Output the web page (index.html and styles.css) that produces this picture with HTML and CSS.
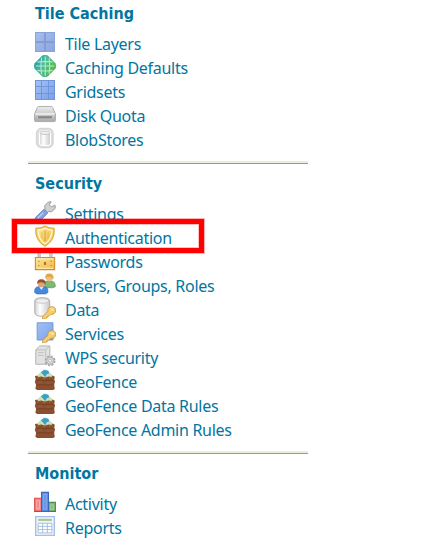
FILE: index.html
```html
<!DOCTYPE html>
<html lang="en">
<head>
<meta charset="utf-8">
<title>Navigation</title>
<link rel="stylesheet" href="styles.css">
</head>
<body>
<svg class="defs" aria-hidden="true">
  <defs>
    <linearGradient id="blue" x1="0" y1="0" x2="1" y2="1"><stop offset="0" stop-color="#a9bdec"/><stop offset="1" stop-color="#8ba6e0"/></linearGradient>
    <linearGradient id="bright" x1="0" y1="0" x2="1" y2="1"><stop offset="0" stop-color="#a3c0f5"/><stop offset="1" stop-color="#7ba2e8"/></linearGradient>
    <linearGradient id="globe" x1="0" y1="0" x2="1" y2=".4"><stop offset="0" stop-color="#1897b4"/><stop offset=".5" stop-color="#46bda0"/><stop offset="1" stop-color="#59bd4b"/></linearGradient>
    <linearGradient id="grey" x1="0" y1="0" x2="1" y2="0"><stop offset="0" stop-color="#d2d2d2"/><stop offset=".35" stop-color="#fff"/><stop offset="1" stop-color="#c9c9c9"/></linearGradient>
    <linearGradient id="disk" x1="0" y1="0" x2="0" y2="1"><stop offset="0" stop-color="#ededed"/><stop offset="1" stop-color="#aaa"/></linearGradient>
    <linearGradient id="gold" x1="0" y1="0" x2="1" y2="1"><stop offset="0" stop-color="#ffe997"/><stop offset="1" stop-color="#edb647"/></linearGradient>
    <g id="key"><path d="M6.3 14.2 10.2 10.5C9.8 8.600 11 7 13 7c1.800 0 3 1.300 2.800 3-.2 2-2 3-3.800 2.600L10.700 14l-1 .1-.2 1.200-1.400.1-.4.5H6.200z" fill="url(#gold)" stroke="#cf9436" stroke-width=".6"/><circle cx="13.500" cy="9.200" r=".8" fill="#fff2b7"/></g>
    <g id="fence"><path d="M1.300 6 7 .7h2L14.700 6v3H1.300z" fill="#cfe1b5" stroke="#b5cda1" stroke-width=".4"/><path d="M5 2.300 7.500.7l3 .5.5 2-1.800.6L8.300 6 6.700 4.200z" fill="#34a0cf"/><path d="M.7 5.300 2 4.700l1.300 1.200 2-.4 2.600.7 2.800-.7 1.800.3 1.200-1.100 1.400 1-.5 2 .7 1.200-.6 2.500.4 3.200-1.200.6H2.200l-1.200-.8.500-2.700L.6 9.200l.7-1.700z" fill="#8a4f2f"/><path d="M1.800 8.200 5 7.900l3 .5 5.800-.4M2 11.600l3.300-.3 3 .4 5.300-.3" fill="none" stroke="#6f3c22" stroke-width=".5"/><path d="M2 6.400h2M6 7l2 .2M11 6.600h2M3 10h3M9 10.100h3" stroke="#a5663f" stroke-width=".5"/></g>
  </defs>
</svg>
<nav class="nav">
  <section class="group">
    <h2 class="title">Tile Caching</h2>
    <ul class="list">
      <li class="item"><svg class="icon" viewBox="0 0 22 22"><path d="M1 1h20v20H1z" fill="#8aa2da"/><path d="M2 2h8v8H2zM12 2h8v8h-8zM2 12h8v8H2zM12 12h8v8h-8z" fill="url(#blue)"/><path d="M11 2v18M2 11h18" stroke="#7f98d2" stroke-width="1"/></svg><a class="link">Tile Layers</a></li>
      <li class="item"><svg class="icon" viewBox="0 0 16 16"><path d="M6.200.5Q8-.2 9.800.5L15.400 6.200q.6 1.800 0 3.600L9.800 15.500q-1.800.7-3.600 0L.6 9.800Q0 8 .6 6.200z" fill="url(#globe)" stroke="#2aa08c" stroke-width=".5"/><path d="M5.500 2q-1 6 0 12M8.200 1v14M11 2.300q1 6 0 11.400M2.500 5q5.500-.8 11 0M1.300 8h13.400M2.500 11.200q5.500.8 11 0" fill="none" stroke="#e5f6d7" stroke-width=".8" opacity=".75"/></svg><a class="link">Caching Defaults</a></li>
      <li class="item"><svg class="icon" viewBox="0 0 22 22"><path d="M1 1h20v20H1z" fill="#7195da"/><path d="M2 2h5v5H2zM8 2h6v5H8zM15 2h5v5h-5zM2 8h5v6H2zM8 8h6v6H8zM15 8h5v6h-5zM2 15h5v5H2zM8 15h6v5H8zM15 15h5v5h-5z" fill="url(#bright)"/></svg><a class="link">Gridsets</a></li>
      <li class="item"><svg class="icon" viewBox="0 0 16 16"><path d="M3.500 2.500h9q.8 0 1.100.8L15.600 8v4.700q0 .8-.8.8H1.200q-.8 0-.8-.8V8l2-4.700q.3-.8 1.100-.8z" fill="url(#disk)" stroke="#a3a3a3" stroke-width=".6"/><path d="M1 8h14" stroke="#f5f5f5"/><path d="M3 9.600h10v1.500H3z" fill="#858585"/></svg><a class="link">Disk Quota</a></li>
      <li class="item"><svg class="icon" viewBox="0 0 16 16"><rect x="1.700" y=".9" width="12.300" height="14.200" rx="3.600" fill="#ddd" stroke="#c8c8c8" stroke-width=".5"/><path d="M4 4q0-1.500 4-1.500t4 1.500v8q0 1.500-4 1.500T4 12z" fill="url(#grey)" stroke="#fff" stroke-width=".8"/><ellipse cx="8" cy="4.200" rx="3.700" ry="1.300" fill="#eee" stroke="#b7b7b7" stroke-width=".5"/></svg><a class="link">BlobStores</a></li>
    </ul>
  </section>
  <section class="group ruled">
    <h2 class="title">Security</h2>
    <ul class="list">
      <li class="item"><svg class="icon" viewBox="0 0 16 16"><path d="m8 6-.2-2.600L10.500.7l2-.1-1.400 2.200 1.500 1.500L15 3l.5.500-.2 2-2.500 2.300-2.500-.1-1.200 1z" fill="#d0d0d0" stroke="#989898" stroke-width=".7"/><path d="M7.200 6 10 8.700 4.300 14.800q-1.400 1-2.900-.1-1.300-1.500-.1-3z" fill="#82a2e0" stroke="#6585c8" stroke-width=".6"/><path d="m6.700 8.500-4 4" stroke="#b9ccf5"/></svg><a class="link">Settings</a></li>
      <li class="item marked"><svg class="icon" viewBox="0 0 16 16"><path d="M8 .7q2.500 1.800 6.700 1.600.8 9-6.700 13.200Q.5 11.300 1.300 2.300 5.500 2.500 8 .7z" fill="#f4cf62" stroke="#daa132" stroke-width=".7"/><path d="M8 2.400q2.200 1.400 5 1.400 0 6.600-5 9.900-5-3.300-5-9.900 2.800 0 5-1.400z" fill="url(#gold)" stroke="#fffbd3" stroke-width=".9"/><path d="M8 4v8" stroke="#dca536" stroke-width=".8"/><path d="M5.800 5v5M10.200 5v5" stroke="#e6b84d" stroke-width=".6"/></svg><a class="link">Authentication</a></li>
      <li class="item"><svg class="icon" viewBox="0 0 16 16"><path d="M3.700 7V3.500q0-2 2-2h4.600q2 0 2 2V7" fill="none" stroke="#aaa" stroke-width="2.200"/><path d="M3.700 7V3.500q0-2 2-2h4.600q2 0 2 2V7" fill="none" stroke="#e2e2e2" stroke-width=".8"/><path d="M1 6.200h14V15H1z" fill="url(#gold)" stroke="#d5892f" stroke-width=".8"/><path d="M2 7.200h12M2 14h12" stroke="#fff1bb" stroke-width=".7"/><path d="M7.200 9.400h1.600v2.200H7.200z" fill="#b86c36"/><path d="M3 9h1M3 12h1M12 9h1M12 12h1" stroke="#ce8930" stroke-width=".8"/></svg><a class="link">Passwords</a></li>
      <li class="item"><svg class="icon" viewBox="0 0 16 16"><path d="M6.500 9.700Q6.500 6.300 9 6h4q2.500.2 2.500 4l-2 .7h-6z" fill="#7bb977" stroke="#559856" stroke-width=".5"/><circle cx="11.200" cy="3.500" r="2.600" fill="#efbd87"/><path d="M8.200 4Q7.900.4 11 .3q3.700 0 3.200 4.300Q13.200 2.600 10.500 2.700 8.900 2.800 8.200 4z" fill="#e5a73f"/><path d="M.5 14.200Q.2 10.200 3 10h4.500q3 .1 2.600 4.200l-1.800 1H2.200z" fill="#4688dc" stroke="#356fc4" stroke-width=".5"/><path d="m3.800 10.200 1.500 2.100 1.700-2.100z" fill="#dce9fa"/><circle cx="5.400" cy="7.700" r="2.700" fill="#dda47c"/><path d="M2.300 8Q2 4.500 5.300 4.500 9 4.500 8.500 8.500 7.200 6.700 5 6.700q-1.700 0-2.700 1.300z" fill="#955231"/></svg><a class="link">Users, Groups, Roles</a></li>
      <li class="item"><svg class="icon" viewBox="0 0 16 16"><path d="M.6 2.700Q1 .5 6 .5t5.400 2.200v9Q11 14 6 14T.6 11.700z" fill="url(#grey)" stroke="#aaa" stroke-width=".7"/><ellipse cx="6" cy="2.900" rx="4.800" ry="1.700" fill="#eee" stroke="#bbb" stroke-width=".5"/><use href="#key"/></svg><a class="link">Data</a></li>
      <li class="item"><svg class="icon" viewBox="0 0 16 16"><path d="M2.300 1.300h11.500v12.500H2.300z" fill="url(#bright)" stroke="#7396da" stroke-width=".7"/><use href="#key"/></svg><a class="link">Services</a></li>
      <li class="item"><svg class="icon" viewBox="0 0 16 16"><path d="M1.300 3.500 4.200.7h7.300v10.800l-2 2.500H1.300z" fill="#e2e2e2" stroke="#b0b0b0" stroke-width=".7"/><path d="M1.500 3.500h7V14M8.500 3.500l3-2.800" fill="none" stroke="#bdbdbd" stroke-width=".7"/><path d="M3 5.500h4M3 7.500h4" stroke="#b8b8b8" stroke-width=".6"/><circle cx="11.700" cy="11.500" r="3.300" fill="#e0e0e0" stroke="#a5a5a5" stroke-width="1.300" stroke-dasharray="1.500 1.090"/><circle cx="11.700" cy="11.500" r="2.500" fill="#ddd" stroke="#aaa" stroke-width=".6"/><circle cx="11.700" cy="11.500" r="1" fill="#fff" stroke="#999" stroke-width=".4"/></svg><a class="link">WPS security</a></li>
      <li class="item"><svg class="icon" viewBox="0 0 16 16"><use href="#fence"/></svg><a class="link">GeoFence</a></li>
      <li class="item"><svg class="icon" viewBox="0 0 16 16"><use href="#fence"/></svg><a class="link">GeoFence Data Rules</a></li>
      <li class="item"><svg class="icon" viewBox="0 0 16 16"><use href="#fence"/></svg><a class="link">GeoFence Admin Rules</a></li>
    </ul>
  </section>
  <section class="group ruled">
    <h2 class="title">Monitor</h2>
    <ul class="list">
      <li class="item"><svg class="icon" viewBox="0 0 16 16"><path d="M.5 5.300h5v9.500h-5z" fill="#ef8787" stroke="#df4444" stroke-width=".8"/><path d="M2 7h2v6H2z" fill="none" stroke="#ffc0bc" stroke-width=".5"/><path d="M10.600 8.300h5v6.500h-5z" fill="#7eb777" stroke="#48934c" stroke-width=".8"/><path d="M12.200 10h1.800v3.500h-1.800z" fill="none" stroke="#b9dda8" stroke-width=".5"/><path d="M5.500 1h5v13.800h-5z" fill="#6596e5" stroke="#3a66bb" stroke-width=".8"/><path d="M7 2.500h2v10.700H7z" fill="none" stroke="#8fb5f4" stroke-width=".5"/><path d="M.3 14.900h15.400" stroke="#59658f" stroke-width=".6"/></svg><a class="link">Activity</a></li>
      <li class="item"><svg class="icon" viewBox="0 0 16 16"><path d="M1.200 1.200h13.600v13.600H1.200z" fill="#edf4fd" stroke="#a5bfe8"/><path d="M3 2.800h10v1.500H3z" fill="#a7c986"/><path d="M3 6h10v7H3zM3 8.300h10M3 10.600h10M6.300 6v7M9.700 6v7" fill="#fff" stroke="#a6bddc" stroke-width=".7"/></svg><a class="link">Reports</a></li>
    </ul>
  </section>
</nav>
</body>
</html>
```
FILE: styles.css
```css
body {
  margin: 0;
  height: 544px;
  overflow: hidden;
  background: #fff;
  color: #0076a1;
  font: 16px/24px "Noto Sans", sans-serif;
  letter-spacing: -0.28px;
}

.defs {
  position: absolute;
  width: 0;
  height: 0;
}

.nav {
  width: 280px;
  margin: -6px 0 0 28px;
}

.group {
  padding-bottom: 11px;
}

.ruled {
  border-top: 2px solid #e7f1da;
}

.ruled::before {
  content: "";
  display: block;
  height: 1px;
  background: #969b90;
}

.title {
  box-sizing: border-box;
  height: 36px;
  margin: 0;
  padding: 8px 0 0 7px;
  font: bold 16px/24px "DejaVu Sans Condensed", "DejaVu Sans", sans-serif;
  letter-spacing: 0;
}

.list {
  margin: 0;
  padding: 0;
  list-style: none;
}

.item {
  position: relative;
  display: flex;
  align-items: center;
  gap: 9px;
  height: 24px;
  padding-left: 6px;
}

.icon {
  flex: none;
  width: 22px;
  height: 22px;
}

.link {
  padding-top: 4px;
  white-space: nowrap;
}

.marked::after {
  content: "";
  position: absolute;
  z-index: 1;
  top: -5px;
  left: -16px;
  width: 182px;
  height: 24px;
  border: 5px solid #f00;
  outline: 1px solid rgba(255, 0, 0, 0.3);
  box-shadow: inset 0 0 0 1px rgba(255, 0, 0, 0.25);
}
```
